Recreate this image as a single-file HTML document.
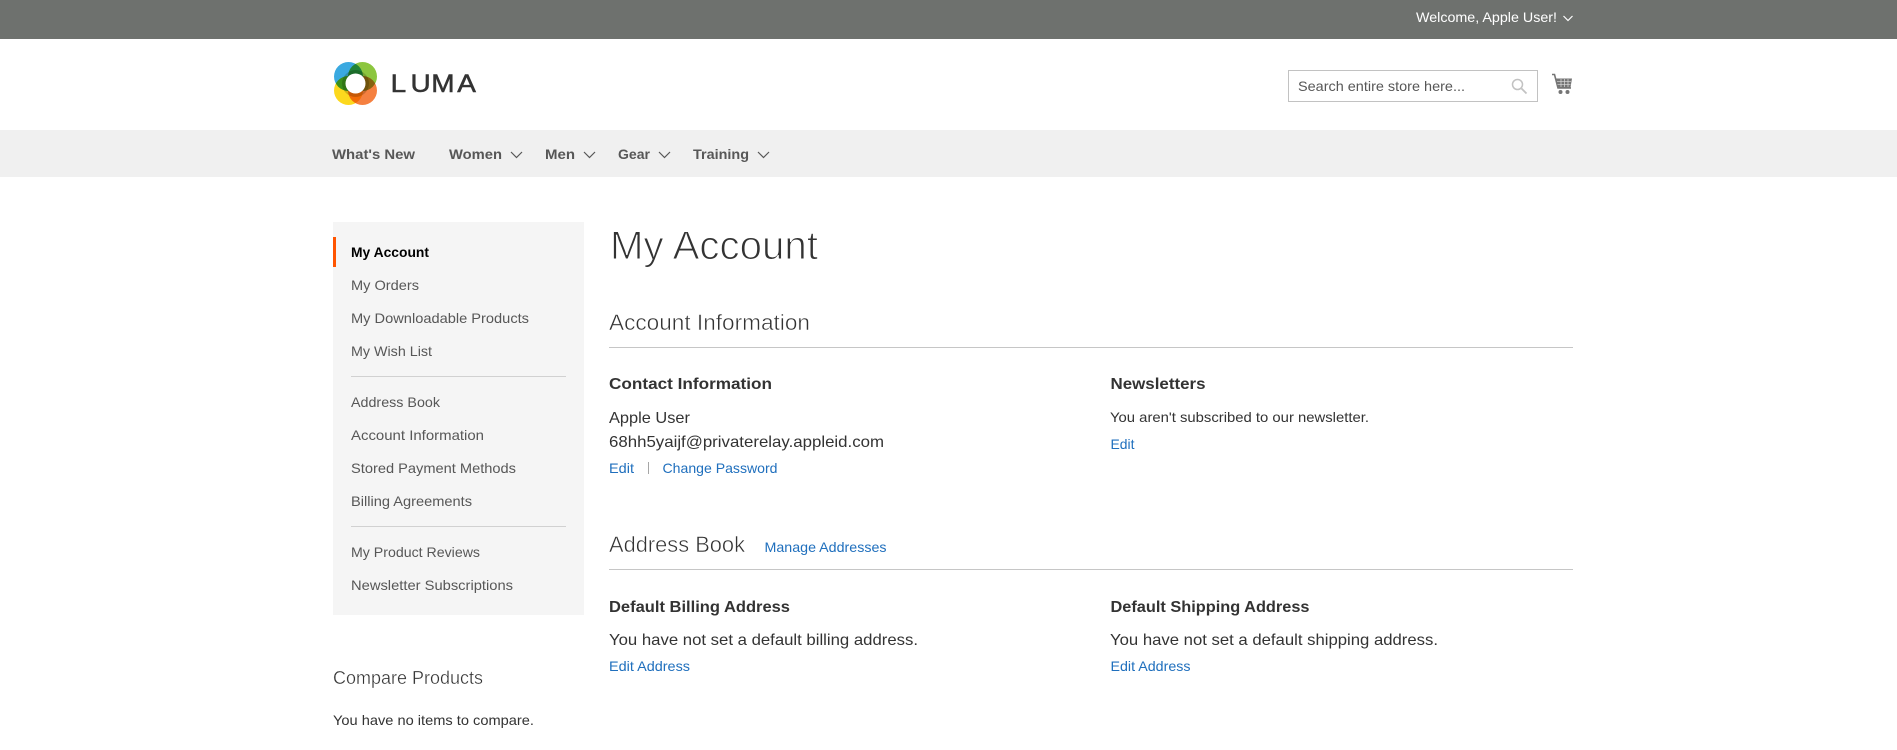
<!DOCTYPE html>
<html lang="en">
<head>
<meta charset="utf-8">
<title>My Account</title>
<style>
html,body{margin:0;padding:0;background:#fff;width:1897px;height:750px;overflow:hidden}
svg{display:block}
text{font-family:"Liberation Sans",Arial,sans-serif;font-size:14px;fill:#333}
.b{font-weight:700}
.nav{font-weight:700;fill:#575757}
.side{fill:#575757}
.link{fill:#1f6fbd}
.lg{fill:#333;stroke:#fff}
</style>
</head>
<body>
<svg width="1897" height="750" viewBox="0 0 1897 750" xmlns="http://www.w3.org/2000/svg">
<!-- top bar -->
<rect x="0" y="0" width="1897" height="39" fill="#6e716e"/>
<text x="1416" y="22" textLength="141" lengthAdjust="spacingAndGlyphs" style="fill:#fff">Welcome, Apple User!</text>
<path d="M1563.500 16l4.500 4.500 4.500-4.500" fill="none" stroke="#fff" stroke-width="1.2"/>

<!-- logo -->
<g style="isolation:isolate">
<circle cx="348.500" cy="76.500" r="14.500" fill="#3aa9e0" style="mix-blend-mode:multiply"/>
<circle cx="362.500" cy="76.500" r="14.500" fill="#8cc63f" style="mix-blend-mode:multiply"/>
<circle cx="348.500" cy="90.500" r="14.500" fill="#fcd81e" style="mix-blend-mode:multiply"/>
<circle cx="362.500" cy="90.500" r="14.500" fill="#f58040" style="mix-blend-mode:multiply"/>
<circle cx="355.500" cy="83.500" r="13.500" fill="#d2d2c0" style="mix-blend-mode:multiply"/>
<circle cx="355.500" cy="83.500" r="10" fill="#fff"/>
</g>
<text y="92" x="348.800 366.500 385.100 408.300" transform="scale(1.12,1)" style="font-size:25px;fill:#333;stroke:#333;stroke-width:.5">LUMA</text>

<!-- search -->
<rect x="1288.500" y="70.500" width="249" height="31" fill="#fff" stroke="#c2c2c2"/>
<text x="1298" y="91" textLength="167" lengthAdjust="spacingAndGlyphs" style="fill:#575757">Search entire store here...</text>
<circle cx="1517.500" cy="84.500" r="5" fill="none" stroke="#c2c2c2" stroke-width="1.500"/>
<path d="M1521.500 88.500l5 5" fill="none" stroke="#c2c2c2" stroke-width="1.800"/>

<!-- cart -->
<path d="M1552 74.500h2.500l3.500 13.500h13" fill="none" stroke="#757575" stroke-width="1.600"/>
<path d="M1556 78.500h16l-1.500 9h-12z" fill="#757575"/>
<path d="M1557 81.300h14M1557.500 84.300h13M1561 79v8M1564.500 79v8M1568 79v8" fill="none" stroke="#ddd" stroke-width=".7"/>
<circle cx="1560.500" cy="92" r="2" fill="#757575"/>
<circle cx="1567.500" cy="92" r="2" fill="#757575"/>

<!-- nav -->
<rect x="0" y="130" width="1897" height="47" fill="#f0f0f0"/>
<text class="nav" x="332" y="159" textLength="83" lengthAdjust="spacingAndGlyphs">What's New</text>
<text class="nav" x="449" y="159" textLength="53" lengthAdjust="spacingAndGlyphs">Women</text>
<text class="nav" x="545" y="159" textLength="30" lengthAdjust="spacingAndGlyphs">Men</text>
<text class="nav" x="618" y="159" textLength="32" lengthAdjust="spacingAndGlyphs">Gear</text>
<text class="nav" x="693" y="159" textLength="56" lengthAdjust="spacingAndGlyphs">Training</text>
<g fill="none" stroke="#575757" stroke-width="1.200">
<path d="M511 152l5.500 5.500 5.500-5.500"/>
<path d="M584 152l5.500 5.500 5.500-5.500"/>
<path d="M659 152l5.500 5.500 5.500-5.500"/>
<path d="M758 152l5.500 5.500 5.500-5.500"/>
</g>

<!-- sidebar -->
<rect x="333" y="222" width="251" height="393" fill="#f5f5f5"/>
<rect x="333" y="237" width="3" height="30" fill="#ff5501"/>
<text class="b" x="351" y="257" textLength="78" lengthAdjust="spacingAndGlyphs" style="fill:#000">My Account</text>
<text class="side" x="351" y="290" textLength="68" lengthAdjust="spacingAndGlyphs">My Orders</text>
<text class="side" x="351" y="323" textLength="178" lengthAdjust="spacingAndGlyphs">My Downloadable Products</text>
<text class="side" x="351" y="356" textLength="81" lengthAdjust="spacingAndGlyphs">My Wish List</text>
<rect x="351" y="376" width="215" height="1" fill="#d1d1d1"/>
<text class="side" x="351" y="407" textLength="89" lengthAdjust="spacingAndGlyphs">Address Book</text>
<text class="side" x="351" y="440" textLength="133" lengthAdjust="spacingAndGlyphs">Account Information</text>
<text class="side" x="351" y="473" textLength="165" lengthAdjust="spacingAndGlyphs">Stored Payment Methods</text>
<text class="side" x="351" y="506" textLength="121" lengthAdjust="spacingAndGlyphs">Billing Agreements</text>
<rect x="351" y="526" width="215" height="1" fill="#d1d1d1"/>
<text class="side" x="351" y="557" textLength="129" lengthAdjust="spacingAndGlyphs">My Product Reviews</text>
<text class="side" x="351" y="590" textLength="162" lengthAdjust="spacingAndGlyphs">Newsletter Subscriptions</text>

<text class="lg" x="333" y="684" textLength="150" lengthAdjust="spacingAndGlyphs" style="font-size:18px;stroke-width:.35">Compare Products</text>
<text x="333" y="725" textLength="201" lengthAdjust="spacingAndGlyphs">You have no items to compare.</text>

<!-- main -->
<text class="lg" x="610" y="259" textLength="208" lengthAdjust="spacingAndGlyphs" style="font-size:40px;stroke-width:1.100">My Account</text>

<text class="lg" x="609" y="330" textLength="201" lengthAdjust="spacingAndGlyphs" style="font-size:22px;stroke-width:.5">Account Information</text>
<rect x="609" y="347" width="964" height="1" fill="#c6c6c6"/>

<text class="b" x="609" y="389" textLength="163" lengthAdjust="spacingAndGlyphs" style="font-size:16px">Contact Information</text>
<text x="609" y="423" textLength="81" lengthAdjust="spacingAndGlyphs" style="font-size:16px">Apple User</text>
<text x="609" y="447" textLength="275" lengthAdjust="spacingAndGlyphs" style="font-size:16px">68hh5yaijf@privaterelay.appleid.com</text>
<text class="link" x="609" y="473" textLength="25" lengthAdjust="spacingAndGlyphs">Edit</text>
<rect x="648" y="462" width="1" height="12" fill="#a6a6a6"/>
<text class="link" x="662.500" y="473" textLength="115" lengthAdjust="spacingAndGlyphs">Change Password</text>

<text class="b" x="1110.500" y="389" textLength="95" lengthAdjust="spacingAndGlyphs" style="font-size:16px">Newsletters</text>
<text x="1110" y="422" textLength="259" lengthAdjust="spacingAndGlyphs">You aren't subscribed to our newsletter.</text>
<text class="link" x="1110.500" y="449" textLength="24" lengthAdjust="spacingAndGlyphs">Edit</text>

<text class="lg" x="609" y="552" textLength="136" lengthAdjust="spacingAndGlyphs" style="font-size:22px;stroke-width:.5">Address Book</text>
<text class="link" x="764.500" y="552" textLength="122" lengthAdjust="spacingAndGlyphs">Manage Addresses</text>
<rect x="609" y="569" width="964" height="1" fill="#c6c6c6"/>

<text class="b" x="609" y="612" textLength="181" lengthAdjust="spacingAndGlyphs" style="font-size:16px">Default Billing Address</text>
<text x="609" y="645" textLength="309" lengthAdjust="spacingAndGlyphs" style="font-size:16px">You have not set a default billing address.</text>
<text class="link" x="609" y="671" textLength="81" lengthAdjust="spacingAndGlyphs">Edit Address</text>

<text class="b" x="1110.500" y="612" textLength="199" lengthAdjust="spacingAndGlyphs" style="font-size:16px">Default Shipping Address</text>
<text x="1110" y="645" textLength="328" lengthAdjust="spacingAndGlyphs" style="font-size:16px">You have not set a default shipping address.</text>
<text class="link" x="1110.500" y="671" textLength="80" lengthAdjust="spacingAndGlyphs">Edit Address</text>
</svg>
</body>
</html>
